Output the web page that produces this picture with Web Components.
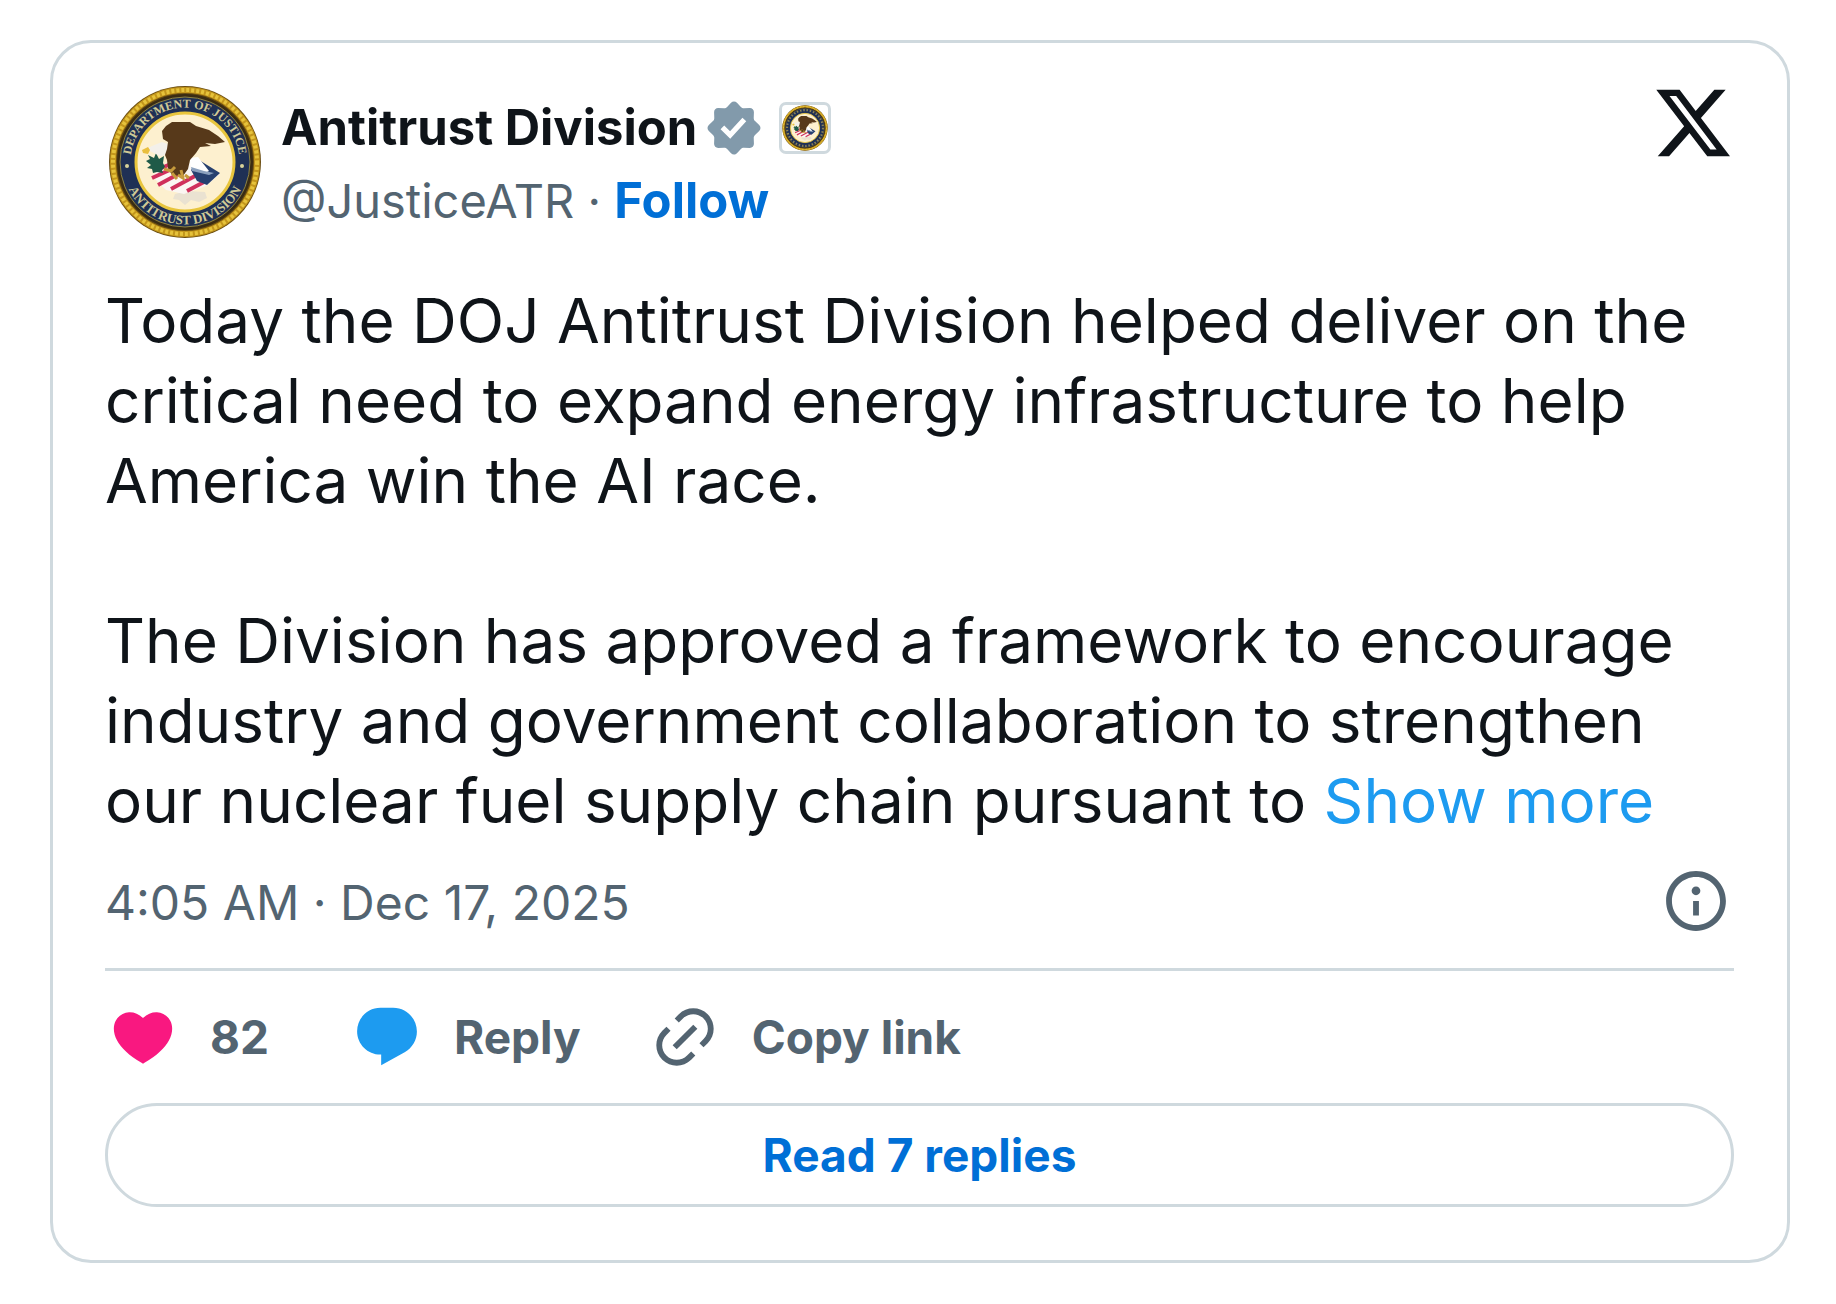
<!DOCTYPE html>
<html lang="en">
<head>
<meta charset="utf-8">
<title>Antitrust Division on X</title>
<style>
    body {
        margin: 0;
        padding: 40px 46px 42px 50px;
        background: #fff;
        color: #0f1419;
        font-family: Inter, "Liberation Sans", sans-serif;
    }
</style>
</head>
<body>
<post-card>
    <post-author slot="header" name="Antitrust Division" handle="@JusticeATR"></post-author>
    <post-text>
        <p>Today the DOJ Antitrust Division helped deliver on the critical need to expand energy infrastructure to help America win the AI race.</p>
        <p>The Division has approved a framework to encourage industry and government collaboration to strengthen our nuclear fuel supply chain pursuant to <a href="#more">Show more</a></p>
    </post-text>
    <post-meta>4:05 AM · Dec 17, 2025</post-meta>
    <post-actions>
        <post-action icon="heart">82</post-action>
        <post-action icon="reply">Reply</post-action>
        <post-action icon="link">Copy link</post-action>
    </post-actions>
    <post-replies>Read 7 replies</post-replies>
</post-card>

<script>
const ICONS = {
    x: '<path d="M18.244 2.25h3.308l-7.227 8.26 8.502 11.24H16.17l-5.214-6.817L4.99 21.75H1.68l7.73-8.835L1.254 2.25H8.08l4.713 6.231zm-1.161 17.52h1.833L7.084 4.126H5.117z"/>',
    info: '<path d="M13.5 8.5c0 .83-.67 1.5-1.5 1.5s-1.5-.67-1.5-1.5S11.17 7 12 7s1.5.67 1.5 1.5zM13 17v-5h-2v5h2zm-1 5.25c5.66 0 10.25-4.59 10.25-10.25S17.66 1.75 12 1.75 1.75 6.34 1.75 12 6.34 22.25 12 22.25zM20.25 12c0 4.56-3.69 8.25-8.25 8.25S3.75 16.56 3.75 12 7.44 3.75 12 3.75s8.25 3.69 8.25 8.25z"/>',
    heart: '<path fill="#f91880" d="M20.884 13.19c-1.351 2.48-4.001 5.12-8.379 7.67l-.503.3-.504-.3c-4.379-2.55-7.029-5.19-8.382-7.67-1.36-2.5-1.41-4.86-.514-6.67.887-1.79 2.647-2.91 4.601-3.01 1.651-.09 3.368.56 4.798 2.01 1.429-1.45 3.146-2.1 4.796-2.01 1.954.1 3.714 1.22 4.601 3.01.896 1.81.846 4.17-.514 6.67z"/>',
    reply: '<path fill="#1d9bf0" d="M1.751 10c0-4.42 3.584-8 8.005-8h4.366c4.49 0 8.129 3.64 8.129 8.13 0 2.96-1.607 5.68-4.196 7.11l-8.054 4.46v-3.69h-.067c-4.49.1-8.183-3.51-8.183-8.01z"/>',
    link: '<path d="M18.36 5.64c-1.95-1.96-5.11-1.96-7.07 0L9.88 7.05 8.46 5.64l1.42-1.42c2.73-2.73 7.16-2.73 9.9 0 2.73 2.74 2.73 7.17 0 9.9l-1.42 1.42-1.41-1.42 1.41-1.41c1.96-1.96 1.96-5.12 0-7.07zm-2.12 3.53l-7.07 7.07-1.41-1.41 7.07-7.07 1.41 1.41zm-12.02.71l1.42-1.42 1.41 1.42-1.41 1.41c-1.96 1.96-1.96 5.12 0 7.07 1.95 1.96 5.11 1.96 7.07 0l1.41-1.41 1.42 1.41-1.42 1.42c-2.73 2.73-7.16 2.73-9.9 0-2.73-2.74-2.73-7.17 0-9.9z"/>'
};

function icon(name) {
    return `<svg viewBox="0 0 24 24" fill="currentColor" aria-hidden="true">${ICONS[name]}</svg>`;
}

// Round seal, used for the avatar and, without lettering, for the affiliate badge
class AgencySeal extends HTMLElement {
    constructor() {
        super();
        this.attachShadow({mode: "open"});
    }

    connectedCallback() {
        const small = this.hasAttribute("small");
        const lettering = small ? `
            <circle cx="80" cy="80" r="60" fill="none" stroke="#8d8355" stroke-width="7" stroke-dasharray="5 6"/>` : `
            <path id="top" fill="none" d="M25.500 80a54.500 54.500 0 0 1 109 0"/>
            <path id="bottom" fill="none" d="M17.500 80a62.500 62.500 0 0 0 125 0"/>
            <text font-size="12"><textPath href="#top" startOffset="50%">DEPARTMENT OF JUSTICE</textPath></text>
            <text font-size="13"><textPath href="#bottom" startOffset="50%">ANTITRUST DIVISION</textPath></text>
            <circle cx="22" cy="84" r="2" fill="#d8d29a"/>
            <circle cx="137" cy="84" r="2" fill="#d8d29a"/>`;
        this.shadowRoot.innerHTML = `
        <style>
            :host {
                display: block;
                flex: none;
            }
            svg {
                display: block;
                width: 100%;
                height: 100%;
            }
            text {
                font-family: "Liberation Serif", serif;
                font-weight: 700;
                fill: #cfc995;
                text-anchor: middle;
            }
        </style>
        <svg viewBox="${small ? "3 3 154 154" : "0 0 160 160"}" role="img" aria-label="Seal">
            <circle cx="80" cy="80" r="76" fill="#6b4e12"/>
            <circle cx="80" cy="80" r="72" fill="none" stroke="#c3961c" stroke-width="6"/>
            <circle cx="80" cy="80" r="72" fill="none" stroke="#e6c33c" stroke-width="4" stroke-dasharray="3 2"/>
            <circle cx="80" cy="80" r="68" fill="#3a2c14"/>
            <circle cx="80" cy="80" r="65" fill="#1f3055" stroke="#8f8340" stroke-width="1"/>
            ${lettering}
            <circle cx="80" cy="80" r="49" fill="#fdf0cf" stroke="#e8c53d" stroke-width="3"/>
            <path fill="#ddd9d2" opacity=".6" d="M70 112l12-3 18 1 2 6-8 4-8-2-6 5-6-5-6-1z"/>
            <path fill="#fbf6f2" d="M47 94l8-7 10-9 24 4 26 10-14 12-22 8-18-4z"/>
            <path fill="none" stroke="#d0305c" stroke-width="4" d="M54 87l14-6M47 96l22-10M53 103l26-14M66 107l24-13M82 109l17-9"/>
            <path fill="#27406f" d="M86 88l8-10 21 13-13 12-10-4z"/>
            <path fill="#fff" d="M84 76l9-1 11 14-4 2-14-5z"/>
            <path fill="#8ba0bd" d="M86 85l13 4 10 2-5 2-17-4z"/>
            <path fill="#1f5a48" d="M43 73l6 3 2-5 3 6 5-3-1 7 2 4-3 3 1 3-6-1-4 1-1-4-5-1 4-3-5-4 4-2z"/>
            <path fill="#f3f0ea" d="M41 67l6-3 10-4 6 2-1 11-7 1-6-3z"/>
            <path fill="#e9bf3e" d="M37 68l6-3 2 3-2 4-5-1z"/>
            <path fill="#57391a" d="M61 44l6-4 11 0 7 0 6 4 13 4 9 6 7 6-10 2-10-1 6 3-11 1-4 6-6 7-2 9-5 7-11-1-4-7-1-8-2-5 2-6 1-7-5-3-1-8z"/>
            <path fill="none" stroke="#c69a3c" stroke-width="3" d="M59 87l7 2 4-4M67 91l5 6M76 88l2 8-5-3M80 93l4 3"/>
        </svg>`;
    }
}

class PostAuthor extends HTMLElement {
    constructor() {
        super();
        this.attachShadow({mode: "open"});
    }

    connectedCallback() {
        this.shadowRoot.innerHTML = `
        <style>
            :host {
                display: flex;
                align-items: center;
                gap: 16px;
            }
            .avatar {
                width: 160px;
                height: 160px;
            }
            .lines {
                display: grid;
                padding-top: 4px;
                line-height: 73px;
            }
            .name {
                display: flex;
                align-items: center;
                gap: 6px;
                font-size: 49px;
                font-weight: 700;
            }
            .verified {
                width: 62px;
                height: 62px;
            }
            .affiliate {
                box-sizing: border-box;
                width: 52px;
                height: 52px;
                margin-left: 8px;
                border: 3px solid #cfd9de;
                border-radius: 7px;
            }
            .handle {
                color: #536471;
                font-size: 47px;
            }
            a {
                color: #006fd6;
                font-size: 49px;
                font-weight: 700;
                text-decoration: none;
            }
        </style>
        <agency-seal class="avatar"></agency-seal>
        <div class="lines">
            <div class="name">
                <span>${this.getAttribute("name")}</span>
                <svg class="verified" viewBox="0 0 22 22" role="img" aria-label="Verified account">
                    <path fill="#829aab" d="M12.05 2.056c-.568-.608-1.532-.608-2.1 0l-1.393 1.49c-.284.303-.685.47-1.1.455L5.42 3.932c-.832-.028-1.514.654-1.486 1.486l.069 2.039c.014.415-.152.816-.456 1.1l-1.49 1.392c-.608.568-.608 1.533 0 2.101l1.49 1.393c.304.284.47.684.456 1.1l-.07 2.038c-.027.832.655 1.514 1.487 1.486l2.038-.069c.415-.014.816.152 1.1.455l1.392 1.49c.569.609 1.533.609 2.102 0l1.393-1.49c.283-.303.684-.47 1.099-.455l2.038.069c.832.028 1.515-.654 1.486-1.486L18 14.542c-.015-.415.152-.815.455-1.099l1.49-1.393c.608-.568.608-1.533 0-2.101l-1.49-1.393c-.303-.283-.47-.684-.455-1.1l.068-2.038c.029-.832-.654-1.514-1.486-1.486l-2.038.07c-.415.013-.816-.153-1.1-.456z"/>
                    <path fill="#fff" d="M6.233 11.423l3.429 3.428 5.683-6.206-1.347-1.247-4.4 4.795-2.072-2.072z"/>
                </svg>
                <agency-seal class="affiliate" small></agency-seal>
            </div>
            <div class="handle">${this.getAttribute("handle")} · <a href="#follow">Follow</a></div>
        </div>`;
    }
}

class PostText extends HTMLElement {
    constructor() {
        super();
        this.attachShadow({mode: "open"}).innerHTML = `
        <style>
            :host {
                display: grid;
                gap: 80px;
                margin-top: 39px;
                font-size: 62px;
                line-height: 80px;
            }
            ::slotted(p) {
                margin: 0;
            }
        </style>
        <slot></slot>`;
        // links sit one level below the slotted paragraphs, out of reach of ::slotted
        this.querySelectorAll("a").forEach(a => {
            a.style.color = "#1d9bf0";
            a.style.textDecoration = "none";
        });
    }
}

class PostMeta extends HTMLElement {
    constructor() {
        super();
        this.attachShadow({mode: "open"}).innerHTML = `
        <style>
            :host {
                display: flex;
                justify-content: space-between;
                align-items: flex-start;
                margin-top: 25px;
                padding: 0 3px 29px 0;
                border-bottom: 3px solid #cfd9de;
                color: #536471;
                font-size: 48px;
                line-height: 73px;
            }
            button {
                padding: 0;
                border: 0;
                background: none;
                color: inherit;
            }
            svg {
                display: block;
                width: 70px;
                height: 70px;
            }
        </style>
        <span><slot></slot></span>
        <button type="button" aria-label="Post information">${icon("info")}</button>`;
    }
}

class PostActions extends HTMLElement {
    constructor() {
        super();
        this.attachShadow({mode: "open"}).innerHTML = `
        <style>
            :host {
                display: flex;
                gap: 69px;
                padding: 31px 3px;
            }
        </style>
        <slot></slot>`;
    }
}

class PostAction extends HTMLElement {
    constructor() {
        super();
        this.attachShadow({mode: "open"});
    }

    connectedCallback() {
        this.shadowRoot.innerHTML = `
        <style>
            :host {
                display: block;
            }
            button {
                display: flex;
                align-items: center;
                gap: 32px;
                padding: 0;
                border: 0;
                background: none;
                color: #536471;
                font: 700 46px/70px Inter, "Liberation Sans", sans-serif;
            }
            span {
                min-width: 73px;
                text-align: left;
            }
            svg {
                width: 70px;
                height: 70px;
            }
        </style>
        <button type="button">${icon(this.getAttribute("icon"))}<span><slot></slot></span></button>`;
    }
}

class PostReplies extends HTMLElement {
    constructor() {
        super();
        this.attachShadow({mode: "open"}).innerHTML = `
        <style>
            :host {
                display: block;
            }
            a {
                display: block;
                border: 3px solid #cfd9de;
                border-radius: 53px;
                color: #006fd6;
                font-size: 46px;
                font-weight: 700;
                line-height: 98px;
                text-align: center;
                text-decoration: none;
            }
        </style>
        <a href="#replies"><slot></slot></a>`;
    }
}

class PostCard extends HTMLElement {
    constructor() {
        super();
        this.attachShadow({mode: "open"}).innerHTML = `
        <style>
            :host {
                display: block;
                padding: 39px 53px 53px 52px;
                border: 3px solid #cfd9de;
                border-radius: 41px;
            }
            header {
                display: flex;
                justify-content: space-between;
                align-items: flex-start;
            }
            svg {
                display: block;
                width: 82px;
                height: 82px;
            }
            a {
                color: inherit;
            }
        </style>
        <header>
            <slot name="header"></slot>
            <a href="#post" aria-label="View on X">${icon("x")}</a>
        </header>
        <slot></slot>`;
    }
}

customElements.define("agency-seal", AgencySeal);
customElements.define("post-author", PostAuthor);
customElements.define("post-text", PostText);
customElements.define("post-meta", PostMeta);
customElements.define("post-actions", PostActions);
customElements.define("post-action", PostAction);
customElements.define("post-replies", PostReplies);
customElements.define("post-card", PostCard);
</script>
</body>
</html>
